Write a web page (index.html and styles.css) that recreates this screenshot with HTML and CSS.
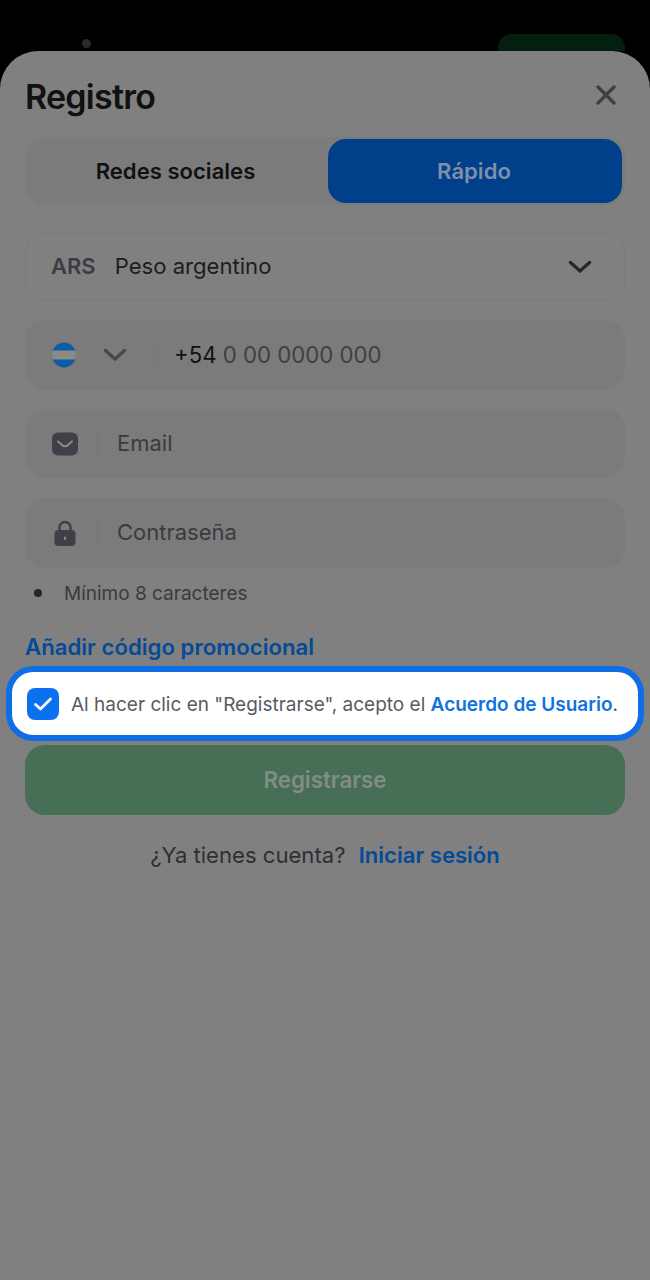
FILE: index.html
```html
<!DOCTYPE html>
<html lang="es">
<head>
<meta charset="utf-8">
<title>Registro</title>
<link rel="stylesheet" href="styles.css">
</head>
<body>
<div class="topbar">
  <span class="dot"></span>
  <span class="top-btn"></span>
</div>
<main class="sheet">
  <header class="sheet-head">
    <h1 class="title">Registro</h1>
    <svg class="close" viewBox="0 0 20 20" width="20" height="20"><path d="M2 2L18 18M18 2L2 18" fill="none" stroke="#404044" stroke-width="3.4" stroke-linecap="round"/></svg>
  </header>
  <div class="tabs">
    <div class="tab">Redes sociales</div>
    <div class="tab tab-active">Rápido</div>
  </div>
  <div class="select">
    <span class="code">ARS</span>
    <span class="currency">Peso argentino</span>
    <svg class="select-chev" viewBox="0 0 24 14" width="24" height="14"><path d="M2.5 2.5L12 11L21.5 2.5" fill="none" stroke="#28282b" stroke-width="3.4" stroke-linecap="round" stroke-linejoin="round"/></svg>
  </div>
  <div class="field field-phone">
    <svg class="flag" viewBox="0 0 24 26" width="24" height="26">
      <defs><clipPath id="c"><ellipse cx="12" cy="13" rx="12" ry="12.5"/></clipPath></defs>
      <g clip-path="url(#c)">
        <rect width="24" height="26" fill="#0d5ca8"/>
        <rect y="8.5" width="24" height="9" fill="#8a8a8a"/>
        <circle cx="12" cy="13" r="2" fill="#9c8a3a"/>
      </g>
    </svg>
    <svg class="phone-chev" viewBox="0 0 24 14" width="24" height="14"><path d="M2.5 2.5L12 11L21.5 2.5" fill="none" stroke="#47474e" stroke-width="3.4" stroke-linecap="round" stroke-linejoin="round"/></svg>
    <span class="sep sep-phone"></span>
    <span class="phone"><span class="prefix">+54</span> 0 00 0000 000</span>
  </div>
  <div class="field field-email">
    <svg class="ico" viewBox="0 0 26 24" width="26" height="24"><rect width="26" height="23" y="0.5" rx="6" fill="#3f3f47"/><path d="M6 9.5L10.5 13.4Q13 15.2 15.5 13.4L20 9.5" fill="none" stroke="#8d8d8d" stroke-width="2" stroke-linecap="round"/></svg>
    <span class="sep"></span>
    <span class="ph">Email</span>
  </div>
  <div class="field field-pass">
    <svg class="ico" viewBox="0 0 26 26" width="26" height="26"><path d="M7.5 12V7.5a5.5 5.5 0 0 1 11 0V12" fill="none" stroke="#3f3f47" stroke-width="2.4"/><rect x="2.5" y="10" width="21" height="16" rx="4" fill="#3f3f47"/><rect x="12" y="16.5" width="2" height="3.5" rx="1" fill="#8d8d8d"/></svg>
    <span class="sep"></span>
    <span class="ph">Contraseña</span>
  </div>
  <div class="rule"><span class="bullet"></span><span>Mínimo 8 caracteres</span></div>
  <div class="promo">Añadir código promocional</div>
  <div class="consent">
    <span class="check"><svg viewBox="0 0 20 16" width="20" height="16"><path d="M2.5 8.5L7.5 13L17.5 3" fill="none" stroke="#fff" stroke-width="2.8" stroke-linecap="round" stroke-linejoin="round"/></svg></span>
    <span class="consent-text">Al hacer clic en "Registrarse", acepto el <b class="consent-link">Acuerdo de Usuario</b>.</span>
  </div>
  <div class="submit">Registrarse</div>
  <p class="login">¿Ya tienes cuenta? <b class="login-link">Iniciar sesión</b></p>
</main>
</body>
</html>
```
FILE: styles.css
```css
* { box-sizing: border-box; }
html, body { margin: 0; padding: 0; }
body {
  width: 650px;
  height: 1280px;
  overflow: hidden;
  background: #000;
  font-family: Inter, "Liberation Sans", sans-serif;
}
.topbar {
  height: 51px;
  padding: 34px 25px 0 82px;
  display: flex;
  justify-content: space-between;
  align-items: flex-start;
  overflow: hidden;
}
.dot {
  width: 9px;
  height: 9px;
  margin-top: 5px;
  border-radius: 50%;
  background: #2a2a2a;
  filter: blur(.5px);
}
.top-btn {
  width: 127px;
  height: 40px;
  border-radius: 14px;
  background: #03200f;
}
.sheet {
  height: 1229px;
  background: #808080;
  border-radius: 38px 38px 0 0;
  padding: 0 25px;
  display: flex;
  flex-direction: column;
}
.sheet-head {
  height: 86px;
  display: flex;
  justify-content: space-between;
  align-items: center;
  padding-right: 9px;
}
.title {
  margin: 4px 0 0;
  font-size: 34px;
  font-weight: 600;
  letter-spacing: -.75px;
  color: #111;
}
.close { margin-top: 2px; }
.tabs {
  height: 68px;
  background: #7b7b7b;
  border-radius: 20px;
  padding: 2px 3px 2px 0;
  display: flex;
}
.tab {
  flex: 1;
  display: flex;
  align-items: center;
  justify-content: center;
  padding-right: 2px;
  font-size: 22.1px;
  font-weight: 600;
  color: #111;
  border-radius: 18px;
}
.tab-active {
  flex: 0 0 294px;
  background: #003f8a;
  color: #7f8fa8;
}
.select {
  height: 68px;
  margin-top: 28px;
  border: 1px solid #7a7a7a;
  border-radius: 20px;
  padding: 0 32px 0 25px;
  display: flex;
  align-items: center;
  font-size: 22px;
}
.code { font-weight: 600; color: #3c3c42; margin-bottom: 2px; }
.currency { margin-left: 19px; margin-bottom: 2px; color: #1d1d20; flex: 1; font-size: 22.1px; }
.field {
  height: 70px;
  background: #7b7b7b;
  border-radius: 20px;
  display: flex;
  align-items: center;
  padding-left: 26px;
  font-size: 22px;
}
.field-phone { margin-top: 19px; padding-left: 27px; }
.field-email { margin-top: 19px; height: 69px; }
.field-pass { margin-top: 20px; }
.phone-chev { margin-left: 27px; }
.sep {
  width: 1px;
  height: 24px;
  margin: 0 19px;
  background: #757575;
}
.sep-phone { margin: 0 19px 0 27px; }
.phone { color: #3f3f45; font-size: 22.2px; margin-bottom: 2px; }
.prefix { color: #111; }
.ph { color: #3a3a3f; margin-bottom: 2px; }
.ico { margin-left: 1px; }
.rule {
  margin-top: 14px;
  height: 22px;
  display: flex;
  align-items: center;
  gap: 22px;
  padding-left: 9px;
  font-size: 19px;
  color: #3a3a3f;
}
.bullet {
  width: 8px;
  height: 8px;
  border-radius: 50%;
  background: #26262a;
}
.promo {
  margin-top: 30px;
  height: 26px;
  line-height: 26px;
  font-size: 22.2px;
  font-weight: 600;
  color: #054a97;
}
.consent {
  height: 75px;
  margin: 6px -19px 4px -19px;
  background: #fff;
  border: 6px solid #0f6ee6;
  border-radius: 27px;
  display: flex;
  align-items: center;
  padding: 1px 0 0 15px;
  gap: 12px;
  font-size: 19px;
  color: #5a5a60;
  white-space: nowrap;
}
.check {
  width: 32px;
  height: 32px;
  flex: none;
  border-radius: 8px;
  background: #0a72f0;
  display: flex;
  align-items: center;
  justify-content: center;
}
.consent-link { font-weight: 600; color: #0f72e0; }
.submit {
  height: 70px;
  background: #466f55;
  border-radius: 20px;
  display: flex;
  align-items: center;
  justify-content: center;
  padding-bottom: 2px;
  font-size: 22.3px;
  font-weight: 600;
  color: #838c86;
}
.login {
  margin: 26px 0 0;
  text-align: center;
  font-size: 22.1px;
  line-height: 28px;
  color: #2f2f33;
}
.login-link { margin-left: 7px; font-weight: 600; color: #054a97; }
```
